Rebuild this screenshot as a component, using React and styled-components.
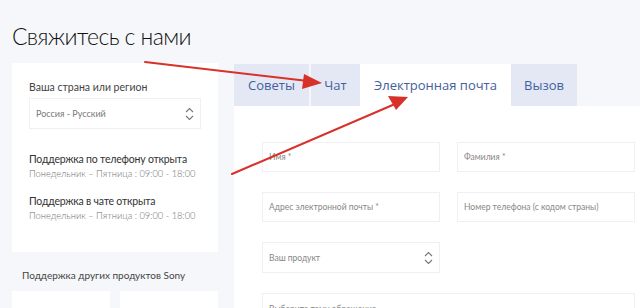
import React from "react";
import styled, { createGlobalStyle } from "styled-components";

const GlobalStyle = createGlobalStyle`
  html, body {
    margin: 0;
    padding: 0;
    background: #f6f7fa;
    font-family: Lato, "Liberation Sans", sans-serif;
  }
  * { box-sizing: border-box; }
`;

const tabs = [
  { label: "Советы", w: 75 },
  { label: "Чат", w: 49, gap: 2 },
  { label: "Электронная почта", w: 151, active: true },
  { label: "Вызов", w: 66 },
];

const Chevrons = () => (
  <svg width="9" height="14" viewBox="0 0 9 14" fill="none" stroke="#777" strokeWidth="1.1">
    <path d="M1 5 L4.5 1.5 L8 5" />
    <path d="M1 9 L4.5 12.5 L8 9" />
  </svg>
);

const Arrows = () => (
  <Overlay width="640" height="308" viewBox="0 0 640 308">
    <g stroke="#d8312a" strokeWidth="2" fill="none" strokeLinecap="round">
      <path d="M145 62 L308 81" />
      <path d="M232 174 L395 104" />
    </g>
    <g fill="#d8312a">
      <polygon points="322,83 304,74 302,89" />
      <polygon points="408,97 388,96 396,110" />
    </g>
  </Overlay>
);

const App = () => {
  return (
    <Page>
      <GlobalStyle />
      <Title>Свяжитесь с нами</Title>
      <Layout>
        <Side>
          <Card>
            <Label>Ваша страна или регион</Label>
            <Select>
              <span>Россия - Русский</span>
              <Chevrons />
            </Select>
            <Status>
              <StatusTitle>Поддержка по телефону открыта</StatusTitle>
              <Hours>Понедельник – Пятница : 09:00 - 18:00</Hours>
            </Status>
            <Status>
              <StatusTitle>Поддержка в чате открыта</StatusTitle>
              <Hours>Понедельник – Пятница : 09:00 - 18:00</Hours>
            </Status>
          </Card>
          <OtherTitle>Поддержка других продуктов Sony</OtherTitle>
          <Tiles>
            <Tile />
            <Tile />
          </Tiles>
        </Side>
        <Main>
          <TabBar>
            {tabs.map((t) => (
              <Tab key={t.label} $w={t.w} $active={t.active} $gap={t.gap}>
                {t.label}
              </Tab>
            ))}
          </TabBar>
          <Panel>
            <Form>
              <Field>Имя *</Field>
              <Field>Фамилия *</Field>
              <Field>Адрес электронной почты *</Field>
              <Field>Номер телефона (с кодом страны)</Field>
              <Field $select>
                <span>Ваш продукт</span>
                <Chevrons />
              </Field>
              <span />
              <Field $wide $select>
                <span>Выберите тему обращения</span>
              </Field>
            </Form>
          </Panel>
        </Main>
      </Layout>
      <Arrows />
    </Page>
  );
};

export default App;

// Styled Components

const Page = styled.div`
  position: relative;
  width: 640px;
  height: 308px;
  overflow: hidden;
  padding: 22px 0 0 12px;
`;

const Title = styled.h1`
  margin: 0;
  font-size: 23px;
  font-weight: 300;
  letter-spacing: -0.6px;
  color: #111;
  line-height: 28px;
`;

const Layout = styled.div`
  display: grid;
  grid-template-columns: 206px 405px;
  column-gap: 17px;
  margin-top: 13px;
`;

const Side = styled.div`
  display: flex;
  flex-direction: column;
`;

const Card = styled.div`
  background: #fff;
  height: 189px;
  padding: 16px 17px 0;
  white-space: nowrap;
`;

const Label = styled.div`
  font-size: 10.5px;
  color: #444;
  line-height: 16px;
  margin-bottom: 3px;
`;

const Select = styled.div`
  display: flex;
  align-items: center;
  justify-content: space-between;
  height: 31px;
  width: 172px;
  border: 1px solid #eef0f3;
  padding: 0 6px 0 6px;
  font-size: 9px;
  color: #777;
  margin-bottom: 22px;
`;

const Status = styled.div`
  margin-bottom: 12px;
`;

const StatusTitle = styled.div`
  font-size: 10.5px;
  letter-spacing: -0.2px;
  color: #333;
  line-height: 16px;
`;

const Hours = styled.div`
  font-size: 9.3px;
  font-weight: 300;
  color: #6f6f6f;
  line-height: 14px;
`;

const OtherTitle = styled.div`
  font-size: 10px;
  color: #444;
  line-height: 16px;
  margin: 15px 0 8px 10px;
  white-space: nowrap;
`;

const Tiles = styled.div`
  display: grid;
  grid-template-columns: 98px 98px;
  column-gap: 10px;
`;

const Tile = styled.div`
  background: #fff;
  height: 40px;
`;

const Main = styled.div`
  display: flex;
  flex-direction: column;
  margin-left: -1px;
  margin-top: 1px;
`;

const TabBar = styled.div`
  display: flex;
`;

const Tab = styled.div`
  width: ${({ $w }) => $w}px;
  margin-left: ${({ $gap }) => $gap || 0}px;
  height: 42px;
  display: flex;
  align-items: center;
  justify-content: center;
  font-family: "Open Sans", "Liberation Sans", sans-serif;
  font-size: 13px;
  color: #43609c;
  background: ${({ $active }) => ($active ? "#fff" : "#e4e8f4")};
`;

const Panel = styled.div`
  background: #fff;
  height: 220px;
  padding: 36px 0 0 28px;
`;

const Form = styled.div`
  display: grid;
  grid-template-columns: 178px 178px;
  column-gap: 17px;
  row-gap: 20px;
`;

const Field = styled.div`
  grid-column: ${({ $wide }) => ($wide ? "1 / span 2" : "auto")};
  height: ${({ $select }) => ($select ? 31 : 30)}px;
  border: 1px solid #eef0f3;
  display: flex;
  align-items: center;
  justify-content: space-between;
  padding: 0 6px 0 6px;
  font-size: 8.5px;
  color: #888;
  white-space: nowrap;
`;

const Overlay = styled.svg`
  position: absolute;
  left: 0;
  top: 0;
  pointer-events: none;
`;
